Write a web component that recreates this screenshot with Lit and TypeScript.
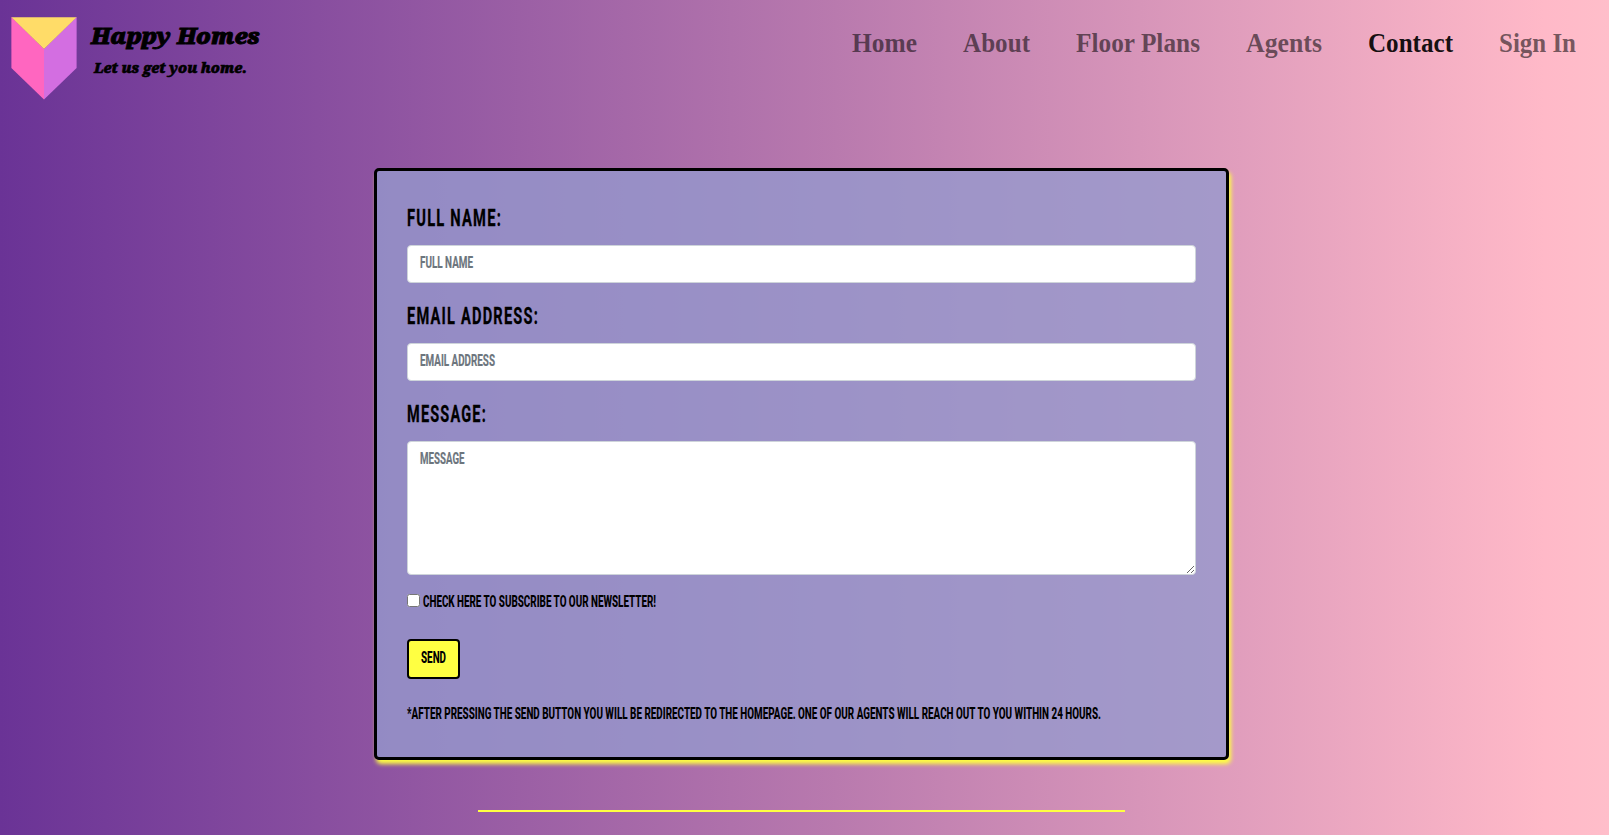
import { LitElement, html, css, svg } from "lit";
import { customElement, property } from "lit/decorators.js";

// A single line of text set to an exact width.
@customElement("fit-text")
class FitText extends LitElement {
  @property() text = "";
  @property({ type: Number }) w = 100;
  @property({ type: Number }) size = 16;
  @property({ type: Number }) h = 24;
  @property({ type: Number }) base = 16;
  static styles = css`
    :host { display: block; line-height: 0; }
    svg { display: block; overflow: visible; }
    text { fill: currentColor; }
  `;
  render() {
    return html`<svg width=${this.w} height=${this.h}>${svg`<text x="0" y=${this.base} font-size=${this.size} textLength=${this.w} lengthAdjust="spacingAndGlyphs">${this.text}</text>`}</svg>`;
  }
}

@customElement("app-root")
class AppRoot extends LitElement {
  static styles = css`
    :host {
      display: block; height: 835px; overflow: hidden; box-sizing: border-box;
      background: linear-gradient(to right, #6a3396, #b97aae 52%, #ffb9c8 96%, #ffbeca);
      font-family: "Roboto", "Liberation Sans", sans-serif; color: #000;
    }
    * { box-sizing: border-box; }
    header { display: flex; justify-content: space-between; height: 168px; padding: 17px 33px 0 11px; }
    .brand { display: flex; gap: 14px; }
    .words { font-family: "Noto Serif", "DejaVu Serif", serif; font-weight: 900; font-style: italic; padding-top: 7px; stroke: #000; stroke-width: .9px; }
    .tag { padding: 3px 0 0 3px; stroke-width: .6px; }
    nav { display: flex; font-family: "Liberation Serif", serif; font-weight: 700; color: rgba(0,0,0,.55); padding-top: 7px; gap: 46px; }
    .active { color: rgba(0,0,0,.92); }
    .card { width: 855px; height: 592px; margin-left: 374px; border: 3px solid #000; border-radius: 5px; padding: 30px; background: rgba(149,152,205,.8); box-shadow: 2px 4px 4px #ffff42; }
    .label { height: 44px; padding-top: 2px; font-weight: 700; letter-spacing: 2px; stroke: #000; stroke-width: .3px; }
    .field { height: 38px; background: #fff; border: 1px solid #ced4da; border-radius: 4px; padding: 6px 12px; color: #6c757d; font-weight: 700; margin-bottom: 16px; stroke: #6c757d; stroke-width: .2px; }
    .area { height: 134px; resize: vertical; overflow: auto; }
    .check { display: flex; gap: 3px; height: 24px; font-weight: 800; }
    input { margin: 3px 0 0; width: 13px; height: 13px; }
    .send { margin-top: 24px; width: 53px; height: 40px; border: 2px solid #000; border-radius: 4px; background: #ffff42; padding: 6px 12px; font: inherit; font-weight: 800; display: block; color: #000; }
    .note { margin-top: 24px; font-weight: 800; }
    .rule { width: 647px; height: 2px; background: #ffff42; margin: 50px 0 0 478px; }
  `;
  render() {
    const links: [string, number][] = [["Home", 65], ["About", 67], ["Floor Plans", 124], ["Agents", 76], ["Contact", 85], ["Sign In", 77]];
    return html`
      <header>
        <div class="brand">
          <svg width="66" height="83"><path fill="#ff66c0" d="M0.4 0L33 32V82.5L0.4 51Z"/><path fill="#d36ee1" d="M65.6 0L33 32V82.5L65.6 51Z"/><path fill="#ffdc68" d="M0.4 0.3H65.6L33 32Z"/></svg>
          <div class="words">
            <fit-text text="Happy Homes" w="169" size="22" h="28" base="20"></fit-text>
            <fit-text class="tag" text="Let us get you home." w="153" size="14.5" h="22" base="17.5"></fit-text>
          </div>
        </div>
        <nav>${links.map(([t, w]) => html`<fit-text class=${t === "Contact" ? "active" : ""} text=${t} w=${w} size="27.5" h="40" base="28.4"></fit-text>`)}</nav>
      </header>
      <div class="card">
        <div class="label"><fit-text text="FULL NAME:" w="95" size="24.3" h="36" base="23.3"></fit-text></div>
        <div class="field"><fit-text text="FULL NAME" w="53" size="16.5" base="16.4"></fit-text></div>
        <div class="label"><fit-text text="EMAIL ADDRESS:" w="132" size="24.3" h="36" base="23.3"></fit-text></div>
        <div class="field"><fit-text text="EMAIL ADDRESS" w="75" size="16.5" base="16.4"></fit-text></div>
        <div class="label"><fit-text text="MESSAGE:" w="80" size="24.3" h="36" base="23.3"></fit-text></div>
        <div class="field area"><fit-text text="MESSAGE" w="44.5" size="16.5" base="16.4"></fit-text></div>
        <div class="check"><input type="checkbox"><fit-text text="CHECK HERE TO SUBSCRIBE TO OUR NEWSLETTER!" w="233" size="16.5" base="16.4"></fit-text></div>
        <button class="send"><fit-text text="SEND" w="25" size="16.5" base="16.4"></fit-text></button>
        <div class="note"><fit-text text="*AFTER PRESSING THE SEND BUTTON YOU WILL BE REDIRECTED TO THE HOMEPAGE. ONE OF OUR AGENTS WILL REACH OUT TO YOU WITHIN 24 HOURS." w="694" size="16.5" base="16.4"></fit-text></div>
      </div>
      <div class="rule"></div>`;
  }
}
